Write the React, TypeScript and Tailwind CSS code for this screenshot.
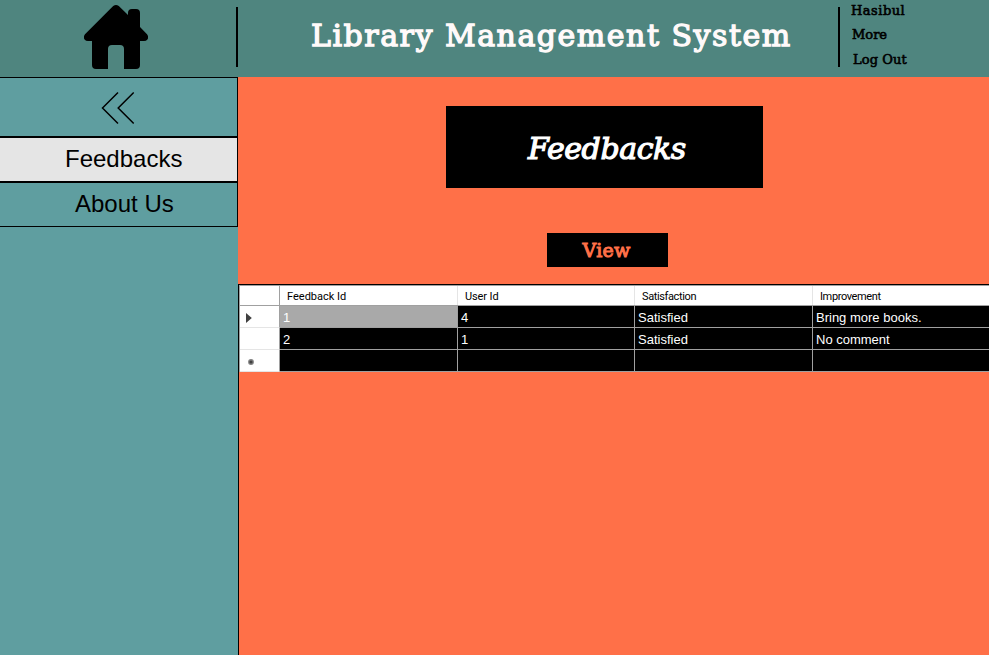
import React from "react";

const columns = ["Feedback Id", "User Id", "Satisfaction", "Improvement"];
const rows = [
  ["1", "4", "Satisfied", "Bring more books."],
  ["2", "1", "Satisfied", "No comment"],
  ["", "", "", ""],
];
const headTracking = ["tracking-[0px]", "tracking-[-0.1px]", "tracking-[-0.38px]", "tracking-[-0.38px]"];
const grid = "grid grid-cols-[40px_178px_177px_178px_178px]";
const serif = "font-['DejaVu_Serif',serif] font-normal";

function HomeIcon() {
  return (
    <svg className="ml-[84px] mt-[5px]" width="64" height="64" viewBox="0 0 64 64">
      <path d="M29.2 1.1Q32 -1.1 34.8 1.1L44 10V8Q44 4 48 4H52Q56 4 56 8V22L63 29.2Q65 32 63.4 34.5Q62.2 36 60 36H56V60Q56 64 52 64H40V44Q40 40 36 40H28Q24 40 24 44V64H12Q8 64 8 60V36H4Q1.8 36 .6 34.5Q-1 32 1 29.2Z" />
    </svg>
  );
}

export default function App() {
  return (
    <div className="flex h-[655px] w-[989px] flex-col overflow-hidden bg-[#ff7048] text-black">
      <header className={`flex h-[77px] shrink-0 bg-[#4f857f] ${serif}`}>
        <div className="w-[236px]"><HomeIcon /></div>
        <div className="mt-[7px] h-[60px] w-[2px] bg-black" />
        <h1 className="w-[600px] whitespace-nowrap pl-[73px] pt-[16px] text-[30px] leading-[40px] tracking-[1.52px] text-[#fffafa] [-webkit-text-stroke:1.3px_#fffafa]">Library Management System</h1>
        <div className="mt-[7px] h-[60px] w-[2px] bg-black" />
        <nav className="flex flex-col whitespace-nowrap pl-[11px] pt-[1px] text-[13px] leading-[20px] tracking-[0.5px] [-webkit-text-stroke:0.6px_black]">
          <a className="h-[24px]">Hasibul</a>
          <a className="h-[25px] pl-[1px] tracking-[0px]">More</a>
          <a className="pl-[2px] tracking-[0.1px]">Log Out</a>
        </nav>
      </header>
      <div className="flex min-h-0 flex-1">
        <aside className="w-[238px] shrink-0 bg-[#5f9ea0] font-['Liberation_Sans',Arial,sans-serif] text-[24px]">
          <div className="h-[60px] border-y border-r border-black">
            <svg className="ml-[101px] mt-[13px]" width="34" height="34" viewBox="0 0 34 34" fill="none" stroke="black" strokeWidth="1.5">
              <path d="M17 1.5L1.5 17L17 32.5M32.7 1.5L17.2 17L32.7 32.5" />
            </svg>
          </div>
          <div className="h-[45px] border-y border-r border-black bg-[#e5e5e5] pl-[65px] leading-[41px]">Feedbacks</div>
          <div className="h-[45px] border-y border-r border-black pl-[75px] leading-[41px]">About Us</div>
        </aside>
        <main className="flex min-w-0 flex-1 flex-col overflow-hidden">
          <div className={`ml-[208px] mt-[29px] h-[82px] w-[317px] shrink-0 bg-black pl-[5px] text-center text-[30px] italic leading-[86px] tracking-[-0.4px] text-white [-webkit-text-stroke:1.2px_white] ${serif}`}>Feedbacks</div>
          <button className={`ml-[309px] mt-[45px] block h-[34px] w-[121px] shrink-0 bg-black pr-[2px] text-center text-[19px] leading-[34px] tracking-[0.2px] text-[#ff7048] [-webkit-text-stroke:1px_#ff7048] ${serif}`}>View</button>
          <section className="mt-[17px] min-h-0 w-[800px] flex-1 border-l border-t border-black font-['Liberation_Sans',Arial,sans-serif]">
            <div className="w-[751px] border-l border-t border-[#a0a0a0]">
              <div className={`${grid} h-[20px] border-b border-[#a0a0a0] bg-white font-[Roboto,sans-serif] text-[11px] leading-[19px]`}>
                <div className="border-r border-[#a0a0a0]" />
                {columns.map((c, i) => (
                  <div key={c} className={`h-[19px] border-r border-[#e5e5e5] pl-[7px] pt-[1px] ${headTracking[i]}`}>{c}</div>
                ))}
              </div>
              {rows.map((row, r) => (
                <div key={r} className={`${grid} h-[22px] grid-rows-[22px] text-[13px] leading-[18px] text-white`}>
                  <div className="flex items-center border-b border-r border-b-[#e5e5e5] border-r-[#a0a0a0] bg-white">
                    {r === 0 && <svg className="ml-[6px] mt-[2px]" width="6" height="10" viewBox="0 0 6 10"><path d="M0 0L5.8 5L0 10Z" fill="#404040" /></svg>}
                    {r === 2 && <svg className="ml-[8px] mt-[2px]" width="6" height="6" viewBox="0 0 6 6"><circle cx="3" cy="3" r="2.9" fill="#808080" /><circle cx="3" cy="3" r="1.6" fill="#404040" /></svg>}
                  </div>
                  {row.map((v, c) => (
                    <div key={c} className={`border-b border-r border-[#a0a0a0] pl-[3px] pt-[3px] ${r === 0 && c === 0 ? "bg-[#a9a9a9]" : "bg-black"}`}>{v}</div>
                  ))}
                </div>
              ))}
            </div>
          </section>
        </main>
      </div>
    </div>
  );
}
